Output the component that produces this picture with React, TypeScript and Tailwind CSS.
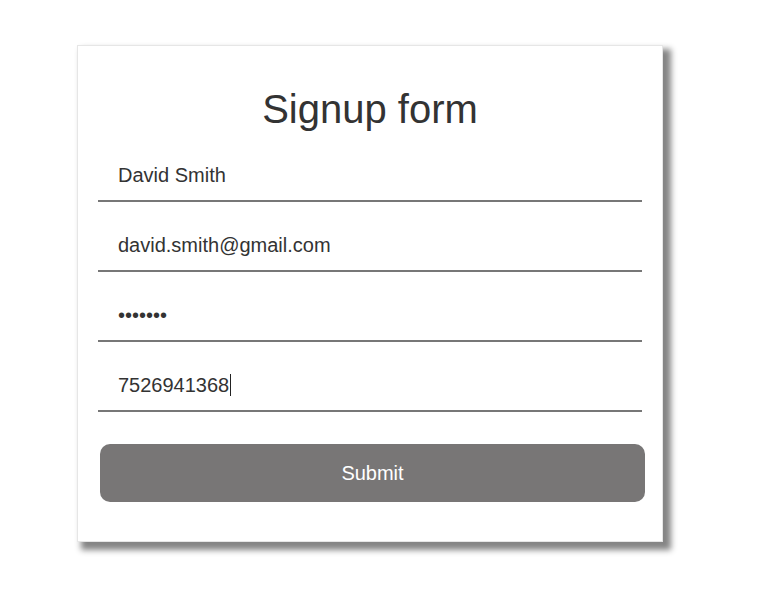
import React from 'react';

const fields = [
  { key: 'name', value: 'David Smith' },
  { key: 'email', value: 'david.smith@gmail.com' },
  { key: 'password', value: '•••••••' },
  { key: 'phone', value: '7526941368', caret: true },
];

const App = () => {
  return (
    <div className="min-h-screen bg-white pt-[45px] pl-[77px] font-['Liberation_Sans',Arial,sans-serif] text-[#333]">
      <div className="w-[586px] h-[497px] bg-white border border-[#e6e6e6] shadow-[6px_6px_6px_2px_#858585] px-[20px] pt-[40px]">
        <h2 className="text-center text-[40px] leading-[46px] text-[#333]">Signup form</h2>

        {fields.map((f) => (
          <div key={f.key} className="h-[70px] flex items-end border-b-2 border-[#777]">
            <div className="pl-[20px] pb-[13px] text-[20px] leading-[24px] flex items-center">
              <span>{f.value}</span>
              {f.caret && <span className="inline-block w-px h-[22px] bg-[#222] ml-[1px]" />}
            </div>
          </div>
        ))}

        <button className="mt-[32px] ml-[2px] w-[545px] h-[58px] rounded-[10px] bg-[#787676] text-white text-[20px]">
          Submit
        </button>
      </div>
    </div>
  );
};

export default App;
